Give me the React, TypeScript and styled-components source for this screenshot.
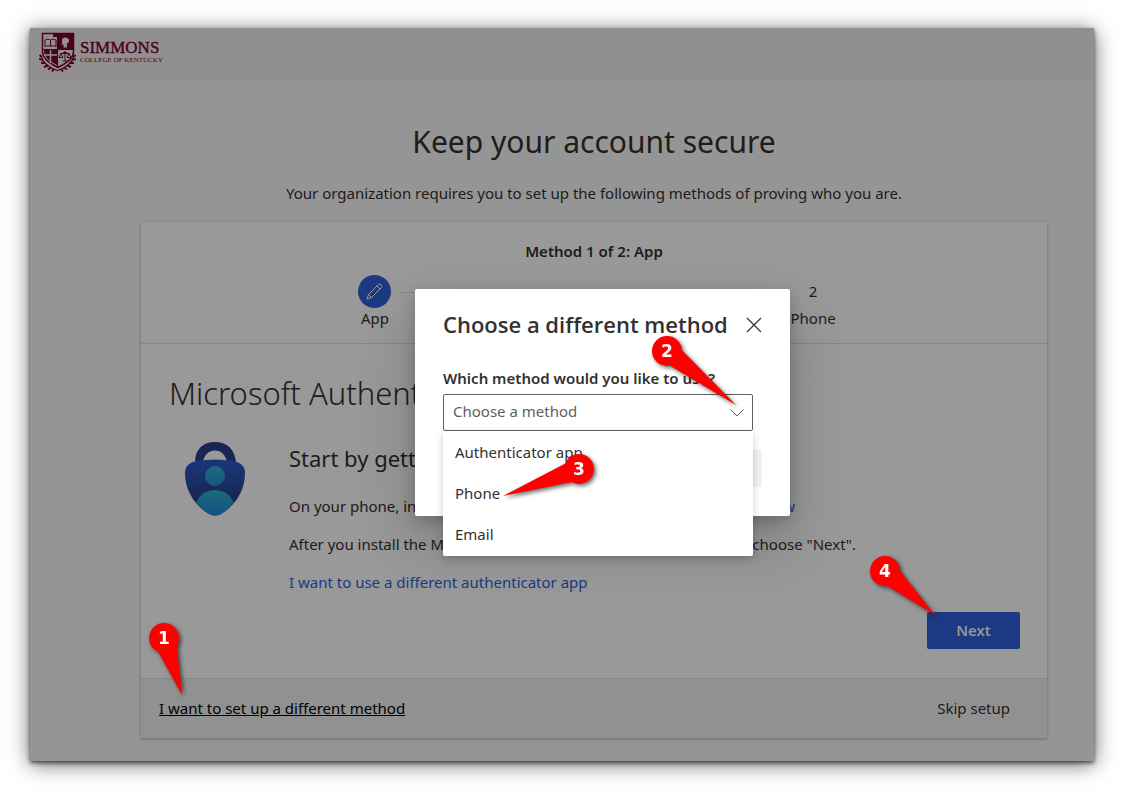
import React from 'react';
import styled, { createGlobalStyle } from 'styled-components';

const Global = createGlobalStyle`
  * { box-sizing: border-box; }
  body { margin: 0; background: #fff; color: #323130; font-family: "Noto Sans", "Open Sans", sans-serif; font-size: 15px; line-height: 22px; }
  h1, h2, h3, p, ul { margin: 0; padding: 0; }
  button, select { font: inherit; color: inherit; }
`;

const Page = styled.div`
  padding: 28px 30px 32px;
`;
const Frame = styled.div`
  position: relative;
  min-height: 733px;
  background: #faf9f9;
  box-shadow: 0 2px 4px rgba(0, 0, 0, 0.6), 0 3px 20px rgba(0, 0, 0, 0.6);
`;
const Header = styled.header`
  display: flex;
  align-items: center;
  gap: 4px;
  height: 53px;
  padding: 0 9px 4px;
  background: #f3f0ee;
`;
const Brand = styled.div`
  padding-bottom: 2px;
  font-family: "Liberation Serif", serif;
  color: #7c0034;
`;
const BrandName = styled.div`
  font-size: 17px;
  line-height: 16px;
  -webkit-text-stroke: 0.4px #7c0034;
`;
const BrandSub = styled.div`
  font-size: 7px;
  line-height: 8px;
`;
const Main = styled.main`
  padding: 40px 47px 23px 111px;
  text-align: center;
`;
const Title = styled.h1`
  font-size: 30px;
  line-height: 42px;
  font-weight: 400;
`;
const Intro = styled.p`
  margin: 19px 0 18px;
`;
const Card = styled.section`
  background: #fff;
  box-shadow: 0 1px 3px rgba(0, 0, 0, 0.3);
  text-align: left;
`;
const Progress = styled.div`
  display: flex;
  flex-direction: column;
  align-items: center;
  gap: 13px;
  height: 122px;
  padding-top: 18px;
  border-bottom: 1px solid #e1dfdd;
`;
const ProgressTitle = styled.h2`
  font-size: 15px;
  line-height: 22px;
  font-weight: 600;
`;
const Steps = styled.div`
  display: flex;
  width: 52%;
  gap: 9px;
`;
const Step = styled.div`
  display: flex;
  flex-direction: column;
  align-items: center;
  width: 33px;
  line-height: 20px;
`;
const StepMark = styled.div<{ $active?: boolean }>`
  display: flex;
  align-items: center;
  justify-content: center;
  width: 33px;
  height: 33px;
  padding-bottom: ${(p) => (p.$active ? '0' : '2px')};
  border-radius: 50%;
  background: ${(p) => (p.$active ? '#2f62dc' : 'transparent')};
`;
const StepLine = styled.div`
  flex: 1;
  height: 1px;
  margin-top: 17px;
  background: #e1dfdd;
`;
const Body = styled.div`
  padding: 28px 27px 29px 28px;
`;
const BodyTitle = styled.h2`
  font-size: 31px;
  line-height: 42px;
  font-weight: 300;
`;
const Content = styled.div`
  display: grid;
  grid-template-columns: 120px 1fr;
  margin-top: 27px;
`;
const LockBox = styled.div`
  padding-left: 16px;
`;
const Copy = styled.div`
  display: flex;
  flex-direction: column;
  gap: 16px;
`;
const CopyTitle = styled.h3`
  font-size: 22px;
  line-height: 34px;
  font-weight: 400;
  margin-bottom: 4px;
`;
const CopyLine = styled.p<{ $width: number }>`
  display: flex;
  justify-content: space-between;
  width: ${(p) => p.$width}px;
  white-space: nowrap;
`;
const Link = styled.a`
  color: #2f62dc;
  text-decoration: none;
`;
const Actions = styled.div`
  display: flex;
  justify-content: flex-end;
  margin-top: 19px;
`;
const Anchor = styled.span`
  position: relative;
  display: inline-block;
`;
const Button = styled.button<{ $quiet?: boolean }>`
  width: 93px;
  height: 37px;
  padding-bottom: 3px;
  border: 0;
  border-radius: 2px;
  font-family: "Open Sans", sans-serif;
  font-weight: 600;
  background: ${(p) => (p.$quiet ? '#f3f2f1' : '#2f62dc')};
  color: ${(p) => (p.$quiet ? '#a19f9d' : '#fff')};
`;
const Footer = styled.footer`
  display: flex;
  align-items: center;
  justify-content: space-between;
  height: 60px;
  padding: 0 37px 2px 18px;
  border-top: 1px solid #e1dfdd;
  background: #f3f2f2;
`;
const FooterLink = styled.a<{ $underlined?: boolean }>`
  color: ${(p) => (p.$underlined ? '#000' : '#323130')};
  text-decoration: ${(p) => (p.$underlined ? 'underline' : 'none')};
`;
const Overlay = styled.div`
  position: absolute;
  inset: 0;
  z-index: 1;
  display: flex;
  align-items: center;
  justify-content: center;
  padding: 16px 0 0 81px;
  background: rgba(0, 0, 0, 0.4);
`;
const Dialog = styled.div`
  width: 375px;
  padding: 20px 28px 29px;
  border-radius: 2px;
  background: #fff;
  box-shadow: 0 26px 58px rgba(0, 0, 0, 0.22), 0 5px 14px rgba(0, 0, 0, 0.18);
`;
const DialogHead = styled.div`
  display: flex;
  align-items: center;
  justify-content: space-between;
  height: 32px;
  margin-bottom: 26px;
`;
const DialogTitle = styled.h2`
  font-family: "Open Sans", sans-serif;
  font-size: 22px;
  line-height: 30px;
  padding-bottom: 2px;
  font-weight: 600;
  white-space: nowrap;
`;
const Close = styled.button`
  display: flex;
  padding: 0;
  border: 0;
  background: none;
`;
const FieldLabel = styled.label`
  display: block;
  height: 27px;
  font-weight: 600;
`;
const Field = styled.div`
  position: relative;
  width: 310px;
`;
const Select = styled.select`
  display: block;
  width: 100%;
  height: 37px;
  padding: 0 36px 3px 9px;
  border: 1px solid #605e5c;
  border-radius: 2px;
  appearance: none;
  background: #fff;
  color: #605e5c;
`;
const Chevron = styled.svg`
  position: absolute;
  right: 8px;
  top: 13px;
`;
const Menu = styled.ul`
  position: absolute;
  top: 37px;
  left: 0;
  right: 0;
  z-index: 2;
  padding: 1px 0;
  list-style: none;
  border-radius: 0 0 2px 2px;
  background: #fff;
  box-shadow: 0 3px 8px rgba(0, 0, 0, 0.2);
`;
const MenuItem = styled.li`
  padding: 10px 12px;
  line-height: 21px;
`;
const DialogActions = styled.div`
  display: flex;
  justify-content: flex-end;
  gap: 8px;
  margin-top: 19px;
`;
const Pin = styled.svg<{ $x: number; $y: number }>`
  position: absolute;
  left: ${(p) => p.$x}px;
  top: ${(p) => p.$y}px;
  z-index: 3;
  width: 1px;
  height: 1px;
  overflow: visible;
  pointer-events: none;
  filter: drop-shadow(2px 2px 2px rgba(0, 0, 0, 0.6));
  text { font: bold 17px "DejaVu Sans", sans-serif; fill: #fff; text-anchor: middle; }
`;

/* A numbered pin: the disc is centred on (x, y), its tail ends at (dx, dy) from there. */
function Marker({ n, x, y, dx, dy }: { n: number; x: number; y: number; dx: number; dy: number }) {
  const len = Math.hypot(dx, dy);
  const ux = dx / len;
  const uy = dy / len;
  const a = [ux * 10 - uy * 10, uy * 10 + ux * 10];
  const b = [ux * 10 + uy * 10, uy * 10 - ux * 10];
  return (
    <Pin $x={x} $y={y}>
      <path d={`M${a[0]} ${a[1]}L${dx} ${dy}L${b[0]} ${b[1]}Z`} fill="#f00" />
      <circle r="15" fill="#f00" />
      <text y="6">{n}</text>
    </Pin>
  );
}

function Crest() {
  return (
    <svg width="37" height="41" viewBox="0 0 37 41" fill="none" stroke="#7c0034">
      <path d="M3.500 1.500h31v18c0 7-7 12-15.500 16C10.500 31.500 3.500 26.500 3.500 19.500z" strokeWidth="1.500" />
      <path d="M19 2h15v15H19zM5 18h13v15C10 29 5 25 5 18z" fill="#7c0034" stroke="none" />
      <path d="M14 1h10v4H14z" fill="#7c0034" stroke="none" />
      <path d="M18.500 3v32M4 17.500h30" strokeWidth="1.200" />
      <path d="M11.500 18v13M5 23h13" stroke="#f3f0ee" strokeWidth="1.500" />
      <path d="M6 8c2-1 4-1 5.500 0 1.500-1 3.500-1 5.500 0v6.500c-2-1-4-1-5.500 0-1.500-1-3.500-1-5.500 0zM11.500 8v6.500" />
      <path d="M23 7c2-2.500 6.500-2 7 1 .3 2-1 3-2 3.500V15.500h-3.500v-3h-2l.5-2z" fill="#f3f0ee" stroke="none" />
      <path d="M26 19v10M21.500 21.500h9M23.500 29h5M20 25.500l2-4 2 4zM28 25.500l2-4 2 4zM24 20.500h4" />
      <path d="M3 25l-2.500-2M4 28l-4-1M6 31l-4 0M9 33.500l-4 1.500M12 35.500l-3 2M15 37l-2 2.500M34 25l2.500-2M33 28l4-1M31 31l4 0M28 33.500l4 1.500M25 35.500l3 2M22 37l2 2.500" strokeWidth="2" />
      <path d="M2 24c2 7 8 12 16.500 14.500C27 36 33 31 35 24" strokeWidth="1.200" />
    </svg>
  );
}

function Lock() {
  return (
    <svg width="60" height="75" viewBox="0 0 60 75">
      <defs>
        <linearGradient id="shield" x1="0" y1="0" x2="0" y2="1">
          <stop offset="0.2" stopColor="#2d5fd6" />
          <stop offset="0.8" stopColor="#263f8a" />
        </linearGradient>
        <linearGradient id="person" x1="0" y1="0" x2="0" y2="1">
          <stop offset="0" stopColor="#2cb4d4" />
          <stop offset="1" stopColor="#2a8fd0" />
        </linearGradient>
        <linearGradient id="torso" x1="0" y1="0" x2="0" y2="1">
          <stop offset="0" stopColor="#2fb6cf" />
          <stop offset="0.6" stopColor="#2289d8" />
        </linearGradient>
        <clipPath id="shape">
          <path d="M12 20Q30 17 48 20Q60 22 60 32C60 52 48 66 36 73Q30 76 24 73C12 66 0 52 0 32Q0 22 12 20Z" />
        </clipPath>
      </defs>
      <path d="M10 22C10 8 18 1 30 1s20 7 21 21h-8.500C40 13 36 9.500 30 9.500s-10.500 3.500-12.500 12.500z" fill="#28408f" />
      <g clipPath="url(#shape)">
        <rect width="60" height="75" fill="url(#shield)" />
        <circle cx="30" cy="35" r="10" fill="url(#person)" />
        <circle cx="30" cy="69" r="20" fill="url(#torso)" />
      </g>
    </svg>
  );
}

export default function App() {
  return (
    <Page>
      <Global />
      <Frame>
        <Header>
          <Crest />
          <Brand>
            <BrandName>SIMMONS</BrandName>
            <BrandSub>COLLEGE OF KENTUCKY</BrandSub>
          </Brand>
        </Header>
        <Main>
          <Title>Keep your account secure</Title>
          <Intro>Your organization requires you to set up the following methods of proving who you are.</Intro>
          <Card>
            <Progress>
              <ProgressTitle>Method 1 of 2: App</ProgressTitle>
              <Steps>
                <Step>
                  <StepMark $active>
                    <svg width="17" height="17" viewBox="0 0 17 17" fill="none" stroke="#fff">
                      <path d="M1 16l1.500-4.500L12.200 1.800a2.100 2.100 0 0 1 3 3L5.500 14.500zM2.500 11.500l3 3M11 3l3 3" />
                    </svg>
                  </StepMark>
                  <span>App</span>
                </Step>
                <StepLine />
                <Step>
                  <StepMark>2</StepMark>
                  <span>Phone</span>
                </Step>
              </Steps>
            </Progress>
            <Body>
              <BodyTitle>Microsoft Authenticator</BodyTitle>
              <Content>
                <LockBox><Lock /></LockBox>
                <Copy>
                  <CopyTitle>Start by getting the app</CopyTitle>
                  <CopyLine $width={506}>
                    <span>On your phone, install the Microsoft Authenticator app.</span>
                    <Link href="#download">Download now</Link>
                  </CopyLine>
                  <CopyLine $width={567}>
                    <span>After you install the Microsoft Authenticator app on your device,</span>
                    <span>choose "Next".</span>
                  </CopyLine>
                  <p><Link href="#other-app">I want to use a different authenticator app</Link></p>
                </Copy>
              </Content>
              <Actions>
                <Anchor>
                  <Button type="button">Next</Button>
                  <Marker n={4} x={-42} y={-41} dx={50} dy={44} />
                </Anchor>
              </Actions>
            </Body>
            <Footer>
              <Anchor>
                <FooterLink $underlined href="#method">I want to set up a different method</FooterLink>
                <Marker n={1} x={5} y={-59} dx={18} dy={57} />
              </Anchor>
              <FooterLink href="#skip">Skip setup</FooterLink>
            </Footer>
          </Card>
        </Main>
        <Overlay>
          <Dialog role="dialog" aria-modal="true" aria-labelledby="dialog-title">
            <DialogHead>
              <DialogTitle id="dialog-title">Choose a different method</DialogTitle>
              <Close type="button" aria-label="Close">
                <svg width="16" height="16" viewBox="0 0 16 16" stroke="#323130" strokeWidth="1.200">
                  <path d="M1 1l14 14M15 1L1 15" />
                </svg>
              </Close>
            </DialogHead>
            <FieldLabel htmlFor="method">Which method would you like to use?</FieldLabel>
            <Field>
              <Select id="method" defaultValue="">
                <option value="">Choose a method</option>
                <option>Authenticator app</option>
                <option>Phone</option>
                <option>Email</option>
              </Select>
              <Chevron width="16" height="12" viewBox="0 0 16 12" fill="none" stroke="#605e5c">
                <path d="M1.500 2.500L8 9l6.500-6.500" />
              </Chevron>
              <Menu role="listbox" aria-label="Methods">
                <MenuItem role="option">Authenticator app</MenuItem>
                <MenuItem role="option">Phone</MenuItem>
                <MenuItem role="option">Email</MenuItem>
              </Menu>
              <Marker n={2} x={224} y={-43} dx={69} dy={54} />
              <Marker n={3} x={136} y={75} dx={-76} dy={27} />
            </Field>
            <DialogActions>
              <Button type="button" $quiet>Cancel</Button>
              <Button type="button" $quiet disabled>Confirm</Button>
            </DialogActions>
          </Dialog>
        </Overlay>
      </Frame>
    </Page>
  );
}
